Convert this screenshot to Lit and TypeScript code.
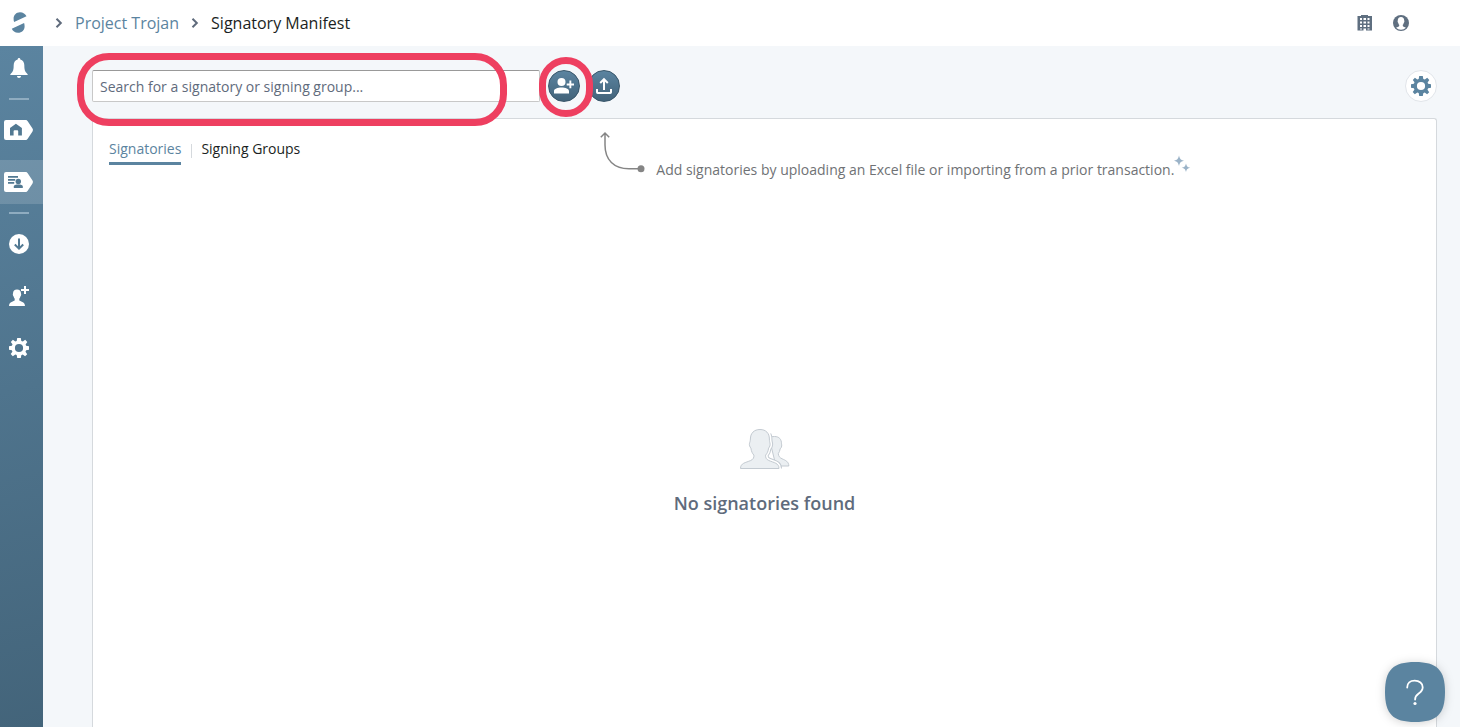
import { LitElement, html, css, svg } from "lit";
import { customElement, state } from "lit/decorators.js";
import { classMap } from "lit/directives/class-map.js";

const gearPath = svg`<path fill-rule="evenodd" d="M8.2 0h3.6l.5 2.9 1.5.6L16.2 1.8l2.1 2.1-1.7 2.5.5 1.4 2.9.5v3.5l-2.9.5-.6 1.5 1.7 2.4-2.1 2.1-2.4-1.7-1.4.6-.5 2.8H8.2l-.5-2.9-1.4-.6-2.5 1.7-2.1-2.1 1.7-2.4-.5-1.4L0 11.8V8.2l2.9-.5.6-1.4-1.7-2.4 2.1-2.1 2.4 1.7 1.4-.6zM10 5.9a4.1 4.1 0 1 0 0 8.2 4.1 4.1 0 0 0 0-8.2z"/>`;
const gear = html`<svg width="20" height="20" viewBox="0 0 20 20" fill="currentColor" aria-hidden="true">${gearPath}</svg>`;
const chevron = html`<svg class="chevron" width="8" height="10" viewBox="0 0 8 10" fill="none" stroke="currentColor" stroke-width="2" aria-hidden="true"><path d="M1.5.8 5.8 5 1.5 9.2"/></svg>`;

const bell = html`<svg width="18" height="20" viewBox="0 0 18 20" fill="currentColor" aria-hidden="true"><path d="M9 0c.8 0 1.300.6 1.300 1.400 2.600.7 4 2.800 4 5.600 0 4.300.5 6.800 2.700 8.600.5.400.8.800.8 1.400H.2c0-.6.3-1 .8-1.400C3.200 13.800 3.700 11.300 3.700 7c0-2.800 1.400-4.900 4-5.600C7.700.6 8.200 0 9 0zM7 18h4c0 1.200-.8 2-2 2s-2-.8-2-2z"/></svg>`;
const tag = (inner: unknown) => html`<svg width="30" height="20" viewBox="0 0 30 20" aria-hidden="true"><path fill="#fff" d="M2 0h19.500c1 0 1.600.4 2.200 1.200l4.800 7.400c.6.900.6 1.900 0 2.800l-4.800 7.400c-.6.8-1.200 1.200-2.200 1.200H2a2 2 0 0 1-2-2V2a2 2 0 0 1 2-2z"/>${inner}</svg>`;
const home = tag(svg`<path fill="#527992" d="M11.900 3.700 17.900 8v7.500h-3.700v-4.300a1 1 0 0 0-1-1h-2.600a1 1 0 0 0-1 1v4.300H6V8z"/>`);
const manifest = tag(svg`<g fill="#527992"><path d="M4 4h10v1.700H4zM4 7h7.200v1.700H4zM4 10h6.200v1.700H4z"/><circle cx="14.300" cy="9.500" r="2.700"/><path d="M9.800 16v-1.400c0-1.400 1.900-2 4.500-2s4.500.6 4.500 2V16z"/></g>`);
const download = html`<svg width="20" height="20" viewBox="0 0 20 20" aria-hidden="true"><circle cx="10" cy="10" r="10" fill="#fff"/><path d="M10 4.500v10M5.800 10.500l4.200 4.200 4.200-4.200" fill="none" stroke="#527992" stroke-width="2"/></svg>`;
const addUser = html`<svg width="20" height="20" viewBox="0 0 20 20" fill="currentColor" aria-hidden="true"><path d="M8 3.500c2.500 0 4 1.600 4 4 0 .4.200.6.200 1 0 .8-.3 1.500-.8 2-.2 1-.6 1.700-1.100 2.200v1.500c.5 1.500 5.700 1 5.700 5.800H0c0-4.800 5.200-4.300 5.700-5.800v-1.500c-.5-.5-.9-1.200-1.100-2.200-.5-.5-.8-1.200-.8-2 0-.4.200-.6.200-1 0-2.400 1.500-4 4-4z"/><path d="M15 0h2v3h3v2h-3v3h-2V5h-3V3h3z"/></svg>`;

const nav = [
  { label: "Notifications", icon: bell },
  null,
  { label: "Project home", icon: home },
  { label: "Signatory manifest", icon: manifest, active: true },
  null,
  { label: "Downloads", icon: download },
  { label: "Invite user", icon: addUser },
  { label: "Settings", icon: gear },
];

const frontPerson = "M20 .5c6 0 9.400 3.800 9.400 9.500 0 2 .3 3 .6 4.200.4 1.900-.3 3.700-1.400 4.900-.4 3.200-1.500 5.500-3 7-.2 2.400.5 4.200 3.200 5.400 5.200 2.300 10.200 2.500 10.200 8H.5c0-5.500 5-5.700 10.200-8 2.700-1.200 3.400-3 3.200-5.400-1.500-1.500-2.600-3.800-3-7-1.100-1.200-1.800-3-1.400-4.900.3-1.200.9-2.200.9-4.200 0-5.700 3.600-9.500 9.600-9.500z";

@customElement("app-root")
export class AppRoot extends LitElement {
  @state() private tab = "Signatories";

  static styles = css`
    :host {
      display: flex;
      flex-direction: column;
      height: 100vh;
      overflow: hidden;
      background: #f4f7fa;
      color: #1b1f23;
      font: 14px/20px "Open Sans", "Noto Sans", sans-serif;
    }
    * { box-sizing: border-box; }
    svg { display: block; flex: none; overflow: visible; }
    button { border: 0; padding: 0; margin: 0; background: none; font: inherit; color: inherit; cursor: pointer; }
    a { text-decoration: none; color: inherit; }
    .header {
      display: flex;
      align-items: center;
      flex: none;
      height: 46px;
      padding: 0 51px 0 11px;
      background: #fff;
      font-size: 16px;
      line-height: 24px;
    }
    .logo { margin-right: 27px; color: #5b84a0; }
    .crumbs { display: flex; align-items: center; gap: 12px; flex: 1; }
    .crumbs a { color: #5b84a0; }
    .chevron { color: #5f6b7c; }
    .account { display: flex; align-items: center; gap: 20px; color: #5f6f80; }
    .body { display: flex; flex: 1; min-height: 0; }
    .side {
      display: flex;
      flex-direction: column;
      gap: 8px;
      flex: none;
      width: 43px;
      background: linear-gradient(165deg, #5b84a0, #43647a);
      color: #fff;
    }
    .item { display: flex; align-items: center; justify-content: center; height: 44px; padding-right: 5px; }
    .item.active { background: rgba(255, 255, 255, 0.15); }
    .rule { height: 2px; width: 20px; margin: 0 9px; border: 0; background: #8facc0; }
    .main { display: flex; flex-direction: column; gap: 16px; flex: 1; min-width: 0; padding: 24px 23px 0 49px; }
    .toolbar { display: flex; gap: 8px; align-items: center; }
    .search { position: relative; width: 448px; height: 32px; }
    .search input {
      width: 100%;
      height: 32px;
      padding: 0 7px;
      border: 1px solid #c8c8c8;
      border-top-color: #999;
      border-radius: 2px;
      background: #fff;
      font: inherit;
      color: #1b1f23;
    }
    .search input::placeholder { color: #5f6b7c; opacity: 1; }
    .add { position: relative; z-index: 1; }
    .mark { position: absolute; border: 7px solid #ee3f60; pointer-events: none; }
    .mark-search { left: -15px; top: -17px; width: 430px; height: 73px; border-radius: 32px; }
    .mark-add { left: -9px; top: -13px; width: 54px; height: 60px; border-radius: 27px; }
    .round {
      display: flex;
      align-items: center;
      justify-content: center;
      width: 32px;
      height: 32px;
      border: 1px solid #38566a;
      border-radius: 50%;
      background: linear-gradient(#5b84a0, #42637a);
      color: #fff;
    }
    .round.light { margin-left: auto; background: #fff; border-color: #e1e5ea; color: #5b84a0; }
    .panel {
      display: flex;
      flex-direction: column;
      flex: 1;
      border: 1px solid #d5d9dd;
      border-bottom: 0;
      border-radius: 3px 3px 0 0;
      background: #fff;
    }
    .top { display: flex; align-items: flex-start; padding: 13px 16px 0; }
    .tabs { display: flex; padding-top: 7px; }
    .tab { display: flex; align-items: flex-start; height: 26px; border-bottom: 3px solid transparent; color: #1b1f23; white-space: nowrap; }
    .tab.on { color: #5b84a0; border-color: #5b84a0; }
    .split { width: 1px; height: 14px; margin: 5px 9px 0 10px; background: #d5d9dd; }
    .hint { display: flex; align-items: flex-start; margin-left: 300px; color: #6f7275; }
    .hint span { margin: 28px 0 0 11px; }
    .spark { margin-top: 24px; }
    .empty { display: flex; flex-direction: column; align-items: center; gap: 22px; padding-top: 249px; }
    .empty h2 { margin: 0; font-size: 18px; line-height: 24px; font-weight: 600; color: #5f6b7c; }
    .help { position: fixed; right: 15px; bottom: 5px; width: 60px; height: 60px; filter: drop-shadow(0 1px 5px rgba(0, 0, 0, 0.18)); }
  `;

  private renderTab(name: string) {
    return html`<button role="tab" aria-selected=${this.tab === name ? "true" : "false"}
      class=${classMap({ tab: true, on: this.tab === name })} @click=${() => (this.tab = name)}>${name}</button>`;
  }

  render() {
    return html`
      <header class="header">
        <a class="logo" href="#" aria-label="Home">
          <svg width="17" height="20" viewBox="0 0 17 20" fill="currentColor" aria-hidden="true">
            <path d="M15.500 3.200C14.500 1.200 12 -.8 9 -.8 5.200-.8 2.600 2.200 2.600 5.400c0 1.300.1 2.500.5 3.700zM.8 15.800C1.500 18 4 19.800 7 19.800c3.900 0 6.600-2.900 6.600-6.300 0-1.300-.1-2.400-.5-3.600z"/>
          </svg>
        </a>
        <nav class="crumbs" aria-label="Breadcrumb">
          ${chevron}<a href="#">Project Trojan</a>${chevron}<span>Signatory Manifest</span>
        </nav>
        <div class="account">
          <button aria-label="Organization">
            <svg width="16" height="16" viewBox="0 0 16 16" fill="currentColor" aria-hidden="true">
              <path fill-rule="evenodd" d="M4 0h7v1h4v14.500H.5V1H4zM3 3v2h2V3zm3.500 0v2H9V3zm4 0v2h2V3zM3 6.500v2h2v-2zm3.500 0v2H9v-2zm4 0v2h2v-2zM3 10v2h2v-2zm3.500 0v2H9v-2zm4 0v2h2v-2zM3 13.400v1h2v-1zm3.500 0v2.100H9v-2.100zm4 0v1h2v-1z"/>
            </svg>
          </button>
          <button aria-label="Account">
            <svg width="16" height="16" viewBox="0 0 16 16" aria-hidden="true">
              <circle cx="8" cy="8" r="8" fill="currentColor"/>
              <path fill="#fff" d="M8 2c2.100 0 3.200 1.300 3.200 3.300 0 .5.200.6.200 1.100 0 .6-.3 1.100-.7 1.500-.1.900-.5 1.500-.9 1.900v1.100c.4.900 2 .9 3.100 1.900A6.700 6.700 0 0 1 8 14.800a6.700 6.700 0 0 1-4.900-2c1.100-1 2.700-1 3.100-1.900V9.800c-.4-.4-.8-1-.9-1.900-.4-.4-.7-.9-.7-1.500 0-.5.200-.6.200-1.100C4.800 3.300 5.900 2 8 2z"/>
            </svg>
          </button>
        </div>
      </header>
      <div class="body">
        <nav class="side" aria-label="Main">
          ${nav.map((n) => n
            ? html`<a href="#" class=${classMap({ item: true, active: !!n.active })} aria-label=${n.label}>${n.icon}</a>`
            : html`<hr class="rule" />`)}
        </nav>
        <main class="main">
          <div class="toolbar">
            <div class="search">
              <input type="text" aria-label="Search for a signatory or signing group" placeholder="Search for a signatory or signing group..." />
              <div class="mark mark-search"></div>
            </div>
            <div class="add">
              <button class="round" aria-label="Add signatory">
                <svg width="20" height="16" viewBox="0 0 20 16" fill="currentColor" aria-hidden="true">
                  <circle cx="7.500" cy="4" r="4"/>
                  <path d="M0 15.500v-2.200C0 10.600 3.600 9.500 7.500 9.500s7.500 1.100 7.500 3.800v2.200zM15.400 2.500h1.900v3H20v1.900h-2.700v2.900h-1.900V7.400h-2.700V5.500h2.700z"/>
                </svg>
              </button>
              <div class="mark mark-add"></div>
            </div>
            <button class="round" aria-label="Upload signatories">
              <svg width="16" height="16" viewBox="0 0 16 16" fill="none" stroke="currentColor" stroke-width="2" aria-hidden="true">
                <path d="M8 12V1.500M4.200 5 8 1.200 11.800 5M1 11v3.200c0 .5.300.8.800.8h12.400c.5 0 .8-.3.800-.8V11"/>
              </svg>
            </button>
            <button class="round light" aria-label="Manifest settings">${gear}</button>
          </div>
          <section class="panel">
            <div class="top">
              <div class="tabs" role="tablist">
                ${this.renderTab("Signatories")}
                <div class="split"></div>
                ${this.renderTab("Signing Groups")}
              </div>
              <div class="hint">
                <svg width="45" height="42" viewBox="0 0 45 42" fill="none" stroke="#858585" stroke-width="1.500" aria-hidden="true">
                  <path d="M5 1v12c0 15 9 23.700 24 23.700h12M.8 5.300 5 1l4.200 4.300"/>
                  <circle cx="41" cy="36.700" r="3.500" fill="#858585" stroke="none"/>
                </svg>
                <span>Add signatories by uploading an Excel file or importing from a prior transaction.</span>
                <svg class="spark" width="17" height="17" viewBox="0 0 17 17" fill="#9bb3c8" aria-hidden="true">
                  <path d="M5-.5C6 3.200 6.600 3.900 10.200 4.800 6.600 5.700 6 6.400 5 10 4 6.400 3.400 5.700-.2 4.800 3.400 3.900 4 3.200 5-.5zM12 7.500c.8 3 1.400 3.600 4.300 4.300-2.900.7-3.500 1.300-4.300 4.300-.8-3-1.400-3.600-4.300-4.300 2.900-.7 3.500-1.300 4.300-4.300z"/>
                </svg>
              </div>
            </div>
            <div class="empty">
              <svg width="50" height="40" viewBox="0 0 50 40" fill="#ebeff2" stroke="#c3cad1" aria-hidden="true">
                <path d="M29 8.500C31 7.700 33 7.500 34.500 7.500c4.800 0 7 2.900 7 7.300 0 1 .4 1.200.2 2.200-.2 1.300-.7 2.200-1.500 2.800-.3 2-1 3.500-1.900 4.800.2 2.800 1.400 4 3.800 5.200 3.400 1.600 6.700 2.700 6.700 7.200H36z"/>
                <path d=${frontPerson} fill="#fff" stroke="#c3cad1" stroke-width="6" clip-path="inset(7px 0 3px 28px)"/>
                <path d=${frontPerson} fill="#fff" stroke="#fff" stroke-width="4"/>
                <path d=${frontPerson}/>
              </svg>
              <h2>No signatories found</h2>
            </div>
          </section>
        </main>
      </div>
      <button class="help" aria-label="Help">
        <svg width="60" height="60" viewBox="0 0 60 60" fill="none" aria-hidden="true">
          <path fill="#5b84a0" d="M0 30C0 8 8 0 30 0s30 8 30 30-8 30-30 30S0 52 0 30z"/>
          <path stroke="#fff" stroke-width="1.800" stroke-linecap="round" d="M22.200 25.500c0-4.200 3-6.800 7.500-6.800 4.700 0 8 2.700 8 6.500 0 2.900-1.400 4.400-4 6.300-2.700 1.900-3.600 3.300-3.600 6"/>
          <circle cx="30" cy="41.500" r="1.600" fill="#fff"/>
        </svg>
      </button>
    `;
  }
}
